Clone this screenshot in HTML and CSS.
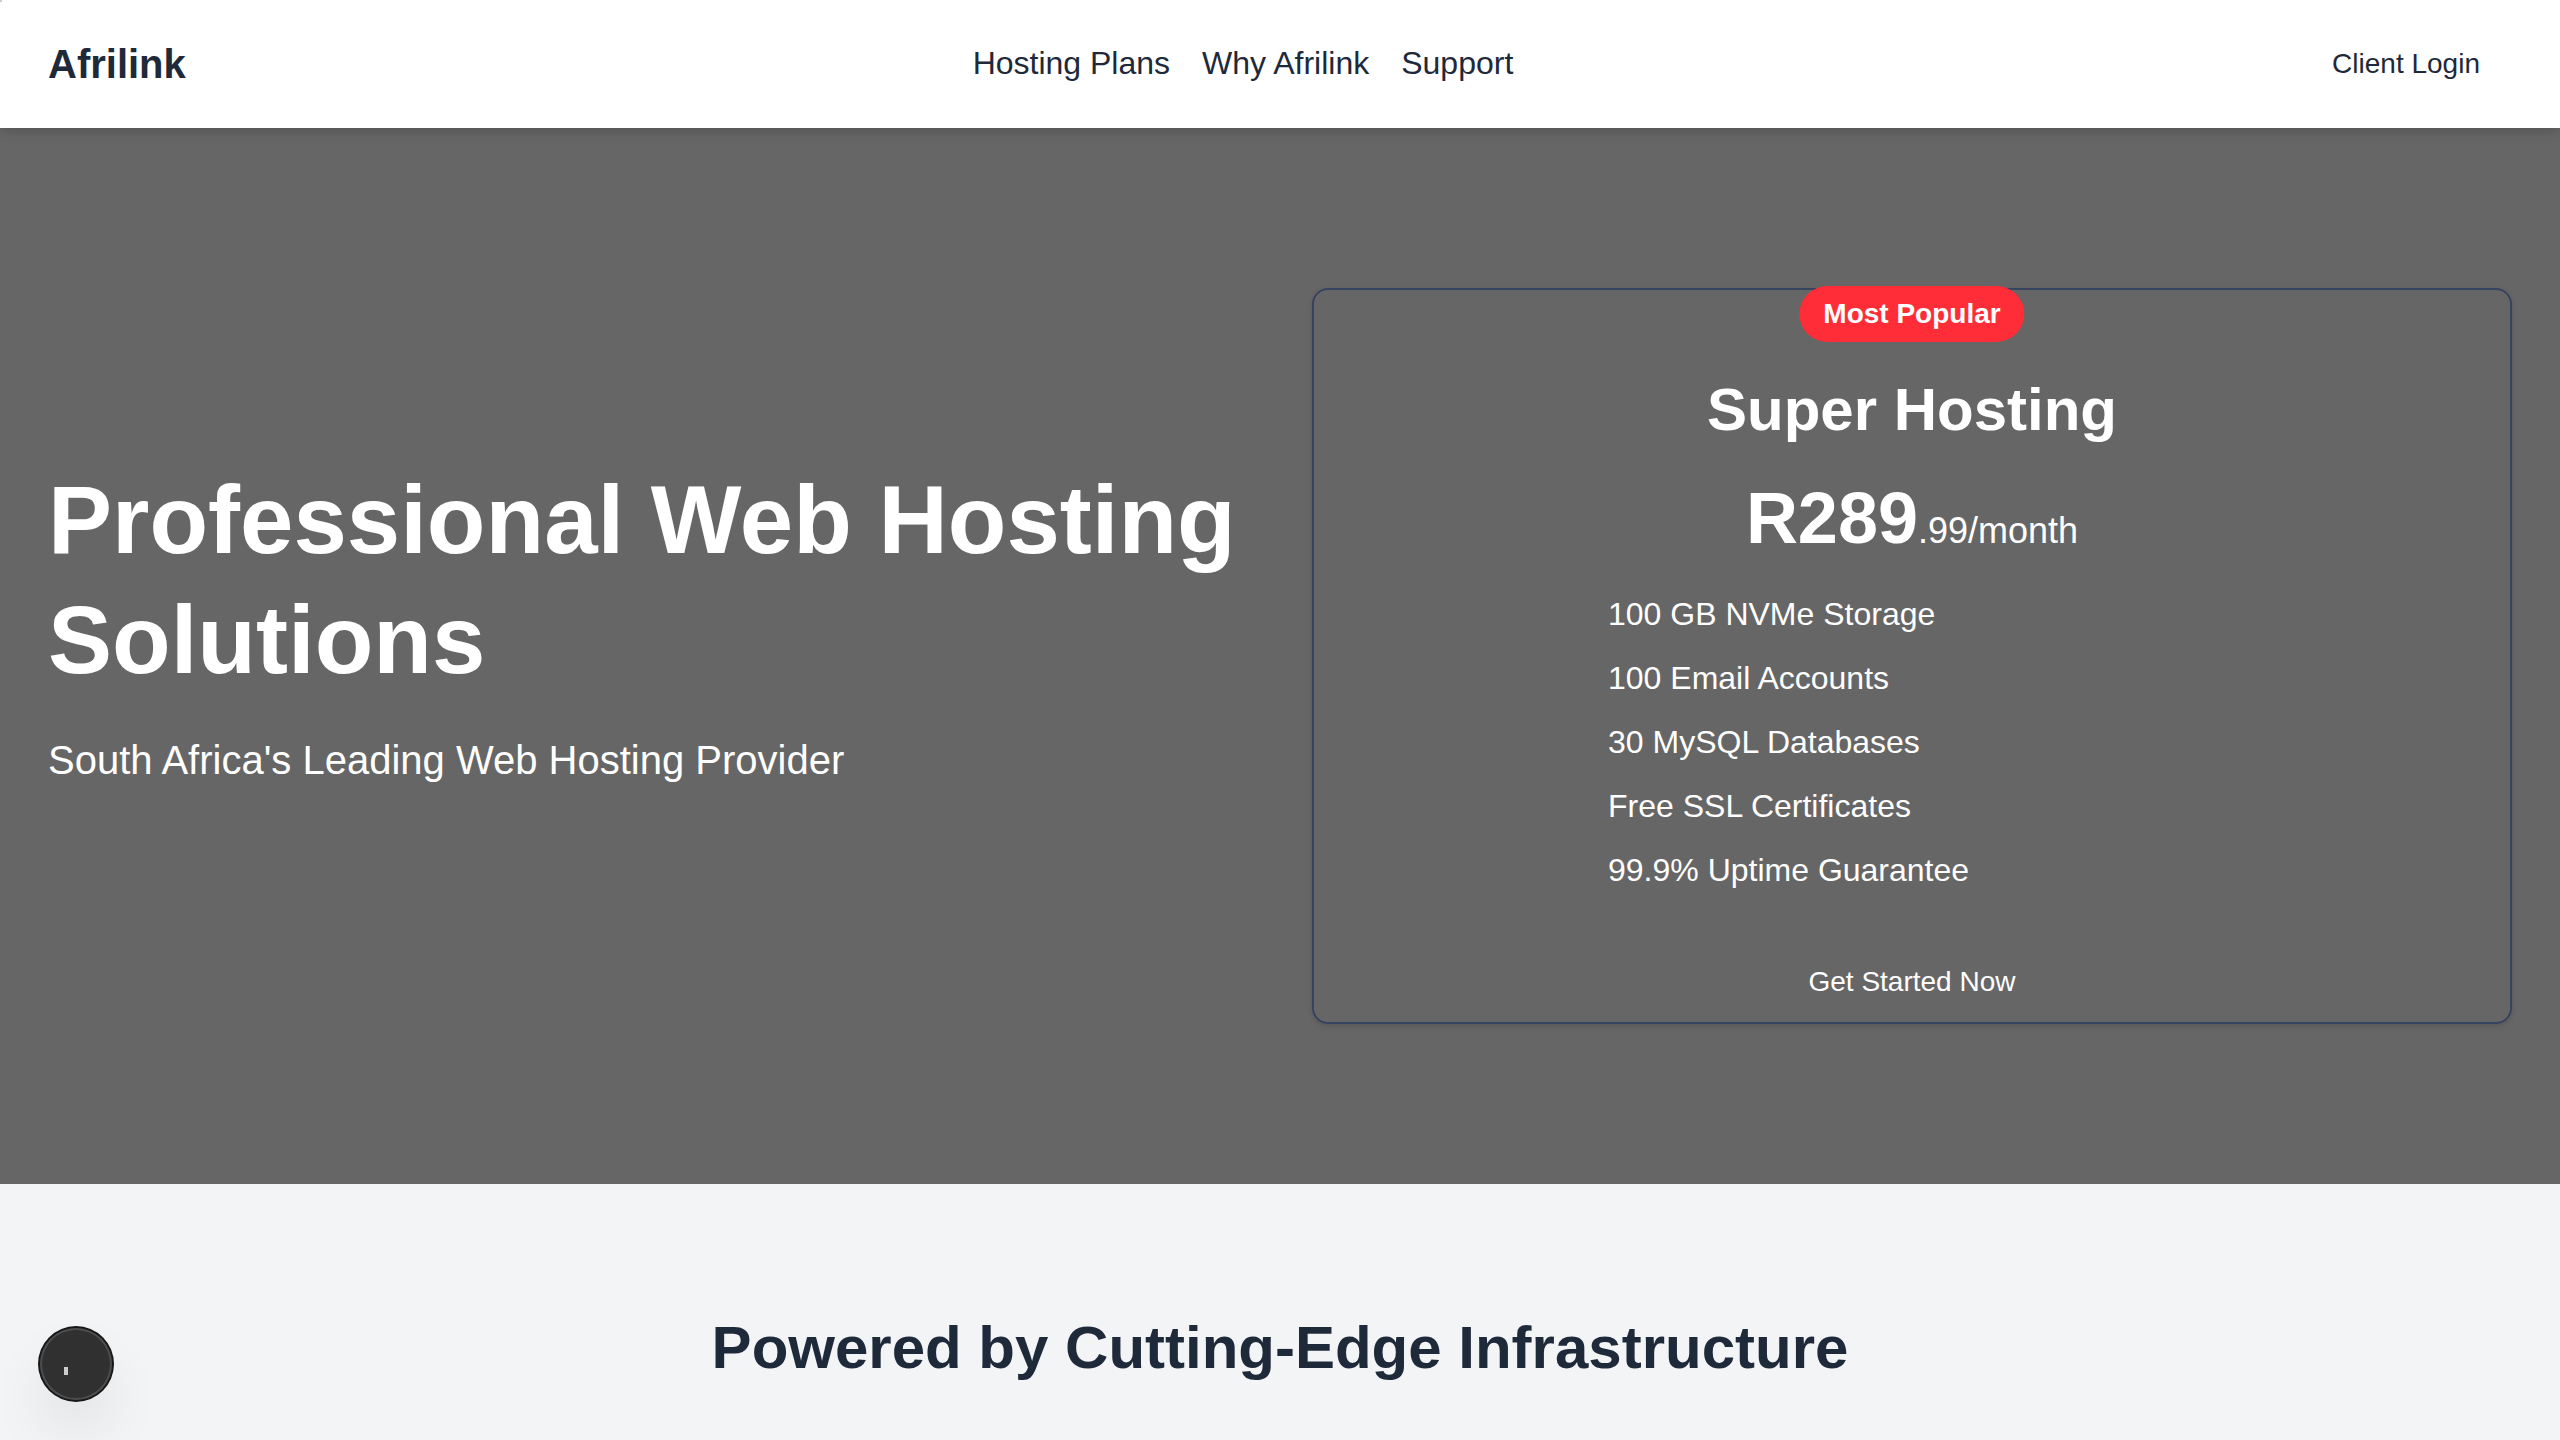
FILE: index.html
```html
<!DOCTYPE html>
<html lang="en">
<head>
<meta charset="utf-8">
<title>Afrilink</title>
<link rel="stylesheet" href="styles.css">
</head>
<body>
<header class="site-header">
  <a class="logo" href="#">Afrilink</a>
  <nav class="nav">
    <a href="#plans">Hosting Plans</a>
    <a href="#why">Why Afrilink</a>
    <a href="#support">Support</a>
  </nav>
  <button class="button button-dark" type="button">Client Login</button>
</header>
<main>
  <section class="hero">
    <div class="hero-copy">
      <h1>Professional Web Hosting Solutions</h1>
      <p>South Africa's Leading Web Hosting Provider</p>
    </div>
    <article class="plan" id="plans">
      <span class="badge">Most Popular</span>
      <h2>Super Hosting</h2>
      <p class="price">R289<span class="price-unit">.99/month</span></p>
      <ul class="features">
        <li>100 GB NVMe Storage</li>
        <li>100 Email Accounts</li>
        <li>30 MySQL Databases</li>
        <li>Free SSL Certificates</li>
        <li>99.9% Uptime Guarantee</li>
      </ul>
      <button class="button" type="button">Get Started Now</button>
    </article>
  </section>
  <section class="infrastructure" id="why">
    <h2>Powered by Cutting-Edge Infrastructure</h2>
  </section>
</main>
<span class="corner"></span>
<button class="tools" type="button" aria-label="Open tools">
  <svg width="72" height="72" viewBox="0 0 72 72" aria-hidden="true"><rect x="24" y="39" width="4" height="8" fill="#ccc"/></svg>
</button>
</body>
</html>
```
FILE: styles.css
```css
* { box-sizing: border-box; margin: 0; padding: 0; }

body {
  font-family: "Liberation Sans", Arial, sans-serif;
  font-size: 32px;
  line-height: 48px;
  color: #1e2939;
  background: #fff;
}

a { color: inherit; text-decoration: none; }
ul { list-style: none; }

.site-header {
  position: relative;
  z-index: 1;
  display: flex;
  align-items: center;
  justify-content: space-between;
  min-height: 128px;
  padding: 24px 48px;
  background: #fff;
  box-shadow: 0 8px 12px -2px rgba(0, 0, 0, 0.1), 0 4px 8px -4px rgba(0, 0, 0, 0.1);
}

.logo { font-size: 40px; line-height: 56px; font-weight: 700; }
.nav { display: flex; gap: 32px; padding-bottom: 2px; }

.button {
  height: 80px;
  padding: 0 32px;
  border: 0;
  background: none;
  color: #fff;
  font: 28px/40px "Liberation Sans", Arial, sans-serif;
  cursor: pointer;
}
.button-dark { color: #1e2939; }

.hero {
  display: grid;
  grid-template-columns: 1fr 1fr;
  gap: 64px;
  align-items: center;
  padding: 160px 48px;
  background: #666;
  color: #fff;
}

.hero-copy { padding-bottom: 64px; }
.hero-copy h1 { margin-bottom: 32px; font-size: 96px; line-height: 120px; }
.hero-copy p { font-size: 40px; line-height: 56px; }

.plan {
  position: relative;
  display: flex;
  flex-direction: column;
  align-items: center;
  padding-top: 84px;
  border: 2px solid #364460;
  border-radius: 16px;
  box-shadow: 0 2px 6px rgba(0, 0, 0, 0.1), 0 2px 4px -2px rgba(0, 0, 0, 0.1);
}
.plan h2 { margin-bottom: 32px; font-size: 60px; line-height: 72px; }

.badge {
  position: absolute;
  top: -4px;
  left: 50%;
  transform: translateX(-50%);
  padding: 8px 24px;
  border-radius: 28px;
  background: #ff2d37;
  font-size: 28px;
  line-height: 40px;
  font-weight: 700;
  white-space: nowrap;
}

.price { margin-bottom: 32px; font-size: 72px; line-height: 80px; font-weight: 700; }
.price-unit { font-size: 36px; line-height: 40px; font-weight: 400; }

.features {
  display: grid;
  gap: 16px;
  width: 100%;
  max-width: 608px;
  margin-bottom: 48px;
}

.infrastructure { padding: 128px 48px 56px; background: #f3f4f6; text-align: center; }
.infrastructure h2 { font-size: 60px; line-height: 72px; }

.corner { position: absolute; top: 0; left: 0; z-index: 2; width: 2px; height: 2px; background: #ccc; }

.tools {
  position: fixed;
  left: 40px;
  bottom: 40px;
  width: 72px;
  height: 72px;
  border: 0;
  border-radius: 50%;
  background: #303030;
  box-shadow: 0 0 0 2px #171717, inset 0 0 0 2px #4d4d4d, 0 32px 64px -16px rgba(0, 0, 0, 0.24);
  cursor: pointer;
}
.tools svg { display: block; }
```
